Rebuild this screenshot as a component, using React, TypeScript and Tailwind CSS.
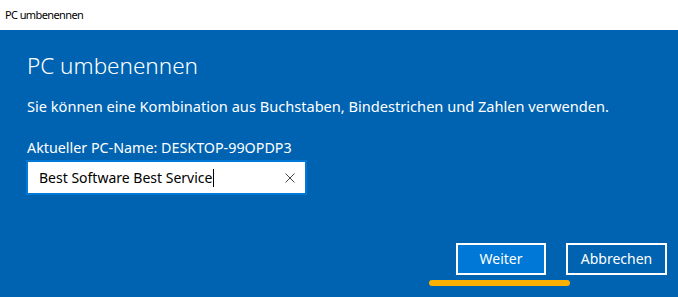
export default function App() {
  return (
    <div className="w-[678px] h-[297px] flex flex-col font-['Noto_Sans',sans-serif] overflow-hidden">
      {/* Titelleiste */}
      <div className="h-[30px] bg-white flex items-center pl-[5px] text-[11px] tracking-[-0.6px] leading-4 text-black">
        PC umbenennen
      </div>

      {/* Dialog */}
      <div className="flex-1 bg-[#0063B1] flex flex-col text-white">
        <div className="px-[27px] pt-[20px]">
          <h1 className="text-[22.5px] leading-[32px] font-light">PC umbenennen</h1>
          <p className="mt-[14px] text-[14.6px] leading-5">
            Sie können eine Kombination aus Buchstaben, Bindestrichen und Zahlen verwenden.
          </p>
          <p className="mt-[22px] text-[14.3px] leading-5">Aktueller PC-Name: DESKTOP-99OPDP3</p>

          <div className="mt-[2px] -ml-[1px] w-[281px] h-[35px] border-2 border-[#0078D7] bg-white flex items-center pl-[11px] pr-[10px] text-black">
            <span className="text-[14px] leading-5">Best Software Best Service</span>
            <span className="w-px h-[18px] bg-black ml-px" />
            <svg className="ml-auto" width="10" height="10" viewBox="0 0 10 10">
              <path d="M0.5 0.5 L9.5 9.5 M9.5 0.5 L0.5 9.5" stroke="#444" strokeWidth="1" />
            </svg>
          </div>
        </div>

        {/* Buttons */}
        <div className="mt-auto flex justify-end gap-[20px] pr-[11px] pb-[22px]">
          <div className="relative">
            <button className="w-[90px] h-[32px] bg-[#0078D7] border-2 border-white text-[14px] leading-5 text-white">
              Weiter
            </button>
            <div className="absolute left-[-27px] top-[37px] w-[141px] h-[6px] rounded-full bg-[#FFB000]" />
          </div>
          <button className="w-[101px] h-[32px] border-2 border-white text-[14px] leading-5 text-white">
            Abbrechen
          </button>
        </div>
      </div>
    </div>
  );
}
